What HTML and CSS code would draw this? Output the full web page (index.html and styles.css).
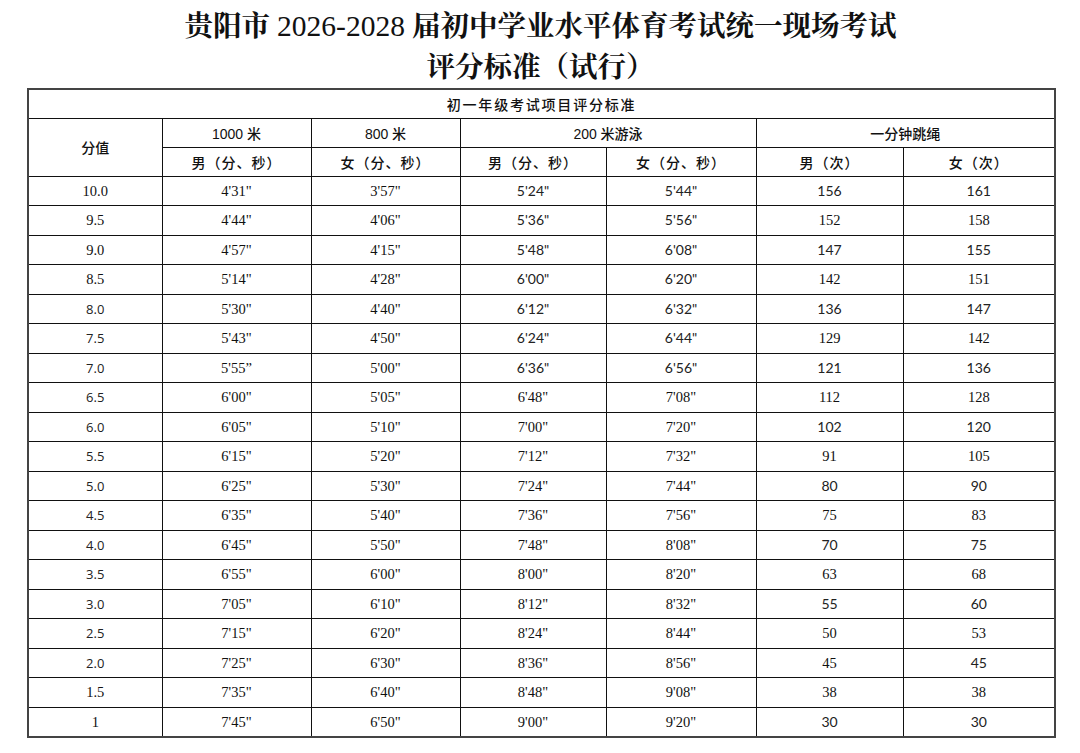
FILE: index.html
```html
<!DOCTYPE html>
<html lang="zh-CN">
<head>
<meta charset="utf-8">
<title>评分标准</title>
<link rel="stylesheet" href="styles.css">
</head>
<body>
<div class="page">
  <h1 class="title">贵阳市 <span class="num">2026-2028</span> 届初中学业水平体育考试统一现场考试<br>评分标准（试行）</h1>
  <table class="grid">
    <colgroup>
      <col class="c-score"><col class="c1"><col class="c2"><col class="c3"><col class="c4"><col class="c5"><col class="c6">
    </colgroup>
    <thead>
      <tr class="hr"><th colspan="7" class="cap">初一年级考试项目评分标准</th></tr>
      <tr class="hr"><th rowspan="2">分值</th><th>1000 米</th><th>800 米</th><th colspan="2">200 米游泳</th><th colspan="2">一分钟跳绳</th></tr>
      <tr class="hr"><th class="sub">男（分、秒）</th><th class="sub">女（分、秒）</th><th class="sub">男（分、秒）</th><th class="sub">女（分、秒）</th><th class="sub">男（次）</th><th class="sub">女（次）</th></tr>
    </thead>
    <tbody>
      <tr><td>10.0</td><td>4'31"</td><td>3'57"</td><td class="s">5'24"</td><td class="s">5'44"</td><td class="s">156</td><td class="s">161</td></tr>
      <tr><td>9.5</td><td>4'44"</td><td>4'06"</td><td class="s">5'36"</td><td class="s">5'56"</td><td>152</td><td>158</td></tr>
      <tr><td>9.0</td><td>4'57"</td><td>4'15"</td><td class="s">5'48"</td><td class="s">6'08"</td><td class="s">147</td><td class="s">155</td></tr>
      <tr><td>8.5</td><td>5'14"</td><td>4'28"</td><td class="s">6'00"</td><td class="s">6'20"</td><td>142</td><td>151</td></tr>
      <tr><td class="v">8.0</td><td>5'30"</td><td>4'40"</td><td class="s">6'12"</td><td class="s">6'32"</td><td class="s">136</td><td class="s">147</td></tr>
      <tr><td class="v">7.5</td><td>5'43"</td><td>4'50"</td><td class="s">6'24"</td><td class="s">6'44"</td><td>129</td><td>142</td></tr>
      <tr><td class="v">7.0</td><td>5'55”</td><td>5'00"</td><td class="s">6'36"</td><td class="s">6'56"</td><td class="s">121</td><td class="s">136</td></tr>
      <tr><td class="v">6.5</td><td>6'00"</td><td>5'05"</td><td>6'48"</td><td>7'08"</td><td>112</td><td>128</td></tr>
      <tr><td class="v">6.0</td><td>6'05"</td><td>5'10"</td><td>7'00"</td><td>7'20"</td><td class="s">102</td><td class="s">120</td></tr>
      <tr><td class="v">5.5</td><td>6'15"</td><td>5'20"</td><td>7'12"</td><td>7'32"</td><td>91</td><td>105</td></tr>
      <tr><td class="v">5.0</td><td>6'25"</td><td>5'30"</td><td>7'24"</td><td>7'44"</td><td class="s">80</td><td class="s">90</td></tr>
      <tr><td class="v">4.5</td><td>6'35"</td><td>5'40"</td><td>7'36"</td><td>7'56"</td><td>75</td><td>83</td></tr>
      <tr><td class="v">4.0</td><td>6'45"</td><td>5'50"</td><td>7'48"</td><td>8'08"</td><td class="s">70</td><td class="s">75</td></tr>
      <tr><td class="v">3.5</td><td>6'55"</td><td>6'00"</td><td>8'00"</td><td>8'20"</td><td>63</td><td>68</td></tr>
      <tr><td class="v">3.0</td><td>7'05"</td><td>6'10"</td><td>8'12"</td><td>8'32"</td><td class="s">55</td><td class="s">60</td></tr>
      <tr><td class="v">2.5</td><td>7'15"</td><td>6'20"</td><td>8'24"</td><td>8'44"</td><td>50</td><td>53</td></tr>
      <tr><td class="v">2.0</td><td>7'25"</td><td>6'30"</td><td>8'36"</td><td>8'56"</td><td>45</td><td class="s">45</td></tr>
      <tr><td>1.5</td><td>7'35"</td><td>6'40"</td><td>8'48"</td><td>9'08"</td><td>38</td><td>38</td></tr>
      <tr><td>1</td><td>7'45"</td><td>6'50"</td><td>9'00"</td><td>9'20"</td><td class="s">30</td><td class="s">30</td></tr>
    </tbody>
  </table>
</div>
</body>
</html>
```
FILE: styles.css
```css
html, body {
  margin: 0;
  background: #fff;
}
body {
  color: #000;
  font-family: "Liberation Serif", "Noto Serif CJK SC", "Noto Sans CJK SC", serif;
}
.page {
  padding: 6px 26px 0 27px;
}
.title {
  margin: 0;
  height: 82px;
  text-align: center;
  font-size: 28.5px;
  line-height: 41px;
  font-weight: 700;
  color: #111;
  font-family: "Liberation Serif", "Noto Serif CJK SC", "Noto Sans CJK SC", serif;
}
.title .num {
  font-weight: 400;
  font-size: 29.5px;
  line-height: 1;
}
.grid {
  width: 1027px;
  border-collapse: collapse;
  table-layout: fixed;
  border: 2px solid #444;
}
.c-score { width: 134px; }
.c1 { width: 149px; }
.c2 { width: 149px; }
.c3 { width: 146px; }
.c4 { width: 150px; }
.c5 { width: 147px; }
.c6 { width: 152px; }
.grid th,
.grid td {
  border: 1px solid #111;
  padding: 0;
  text-align: center;
  vertical-align: middle;
}
.grid th {
  font-family: "Liberation Sans", "Noto Sans CJK SC", sans-serif;
  font-size: 14px;
  font-weight: 500;
  color: #111;
}
.grid .cap {
  letter-spacing: 1.8px;
}
.grid .sub {
  letter-spacing: 1px;
}
.hr {
  height: 29px;
}
.grid tbody tr {
  height: 29.5px;
}
.grid td {
  font-size: 14.5px;
  line-height: 16px;
  font-family: "Liberation Serif", serif;
  color: #111;
}
.grid td.s {
  font-family: Lato, "Liberation Sans", sans-serif;
  font-size: 14px;
  color: #222;
}
.grid td.v {
  font-family: "Open Sans", "DejaVu Sans", sans-serif;
  font-size: 13px;
  color: #222;
}
```
